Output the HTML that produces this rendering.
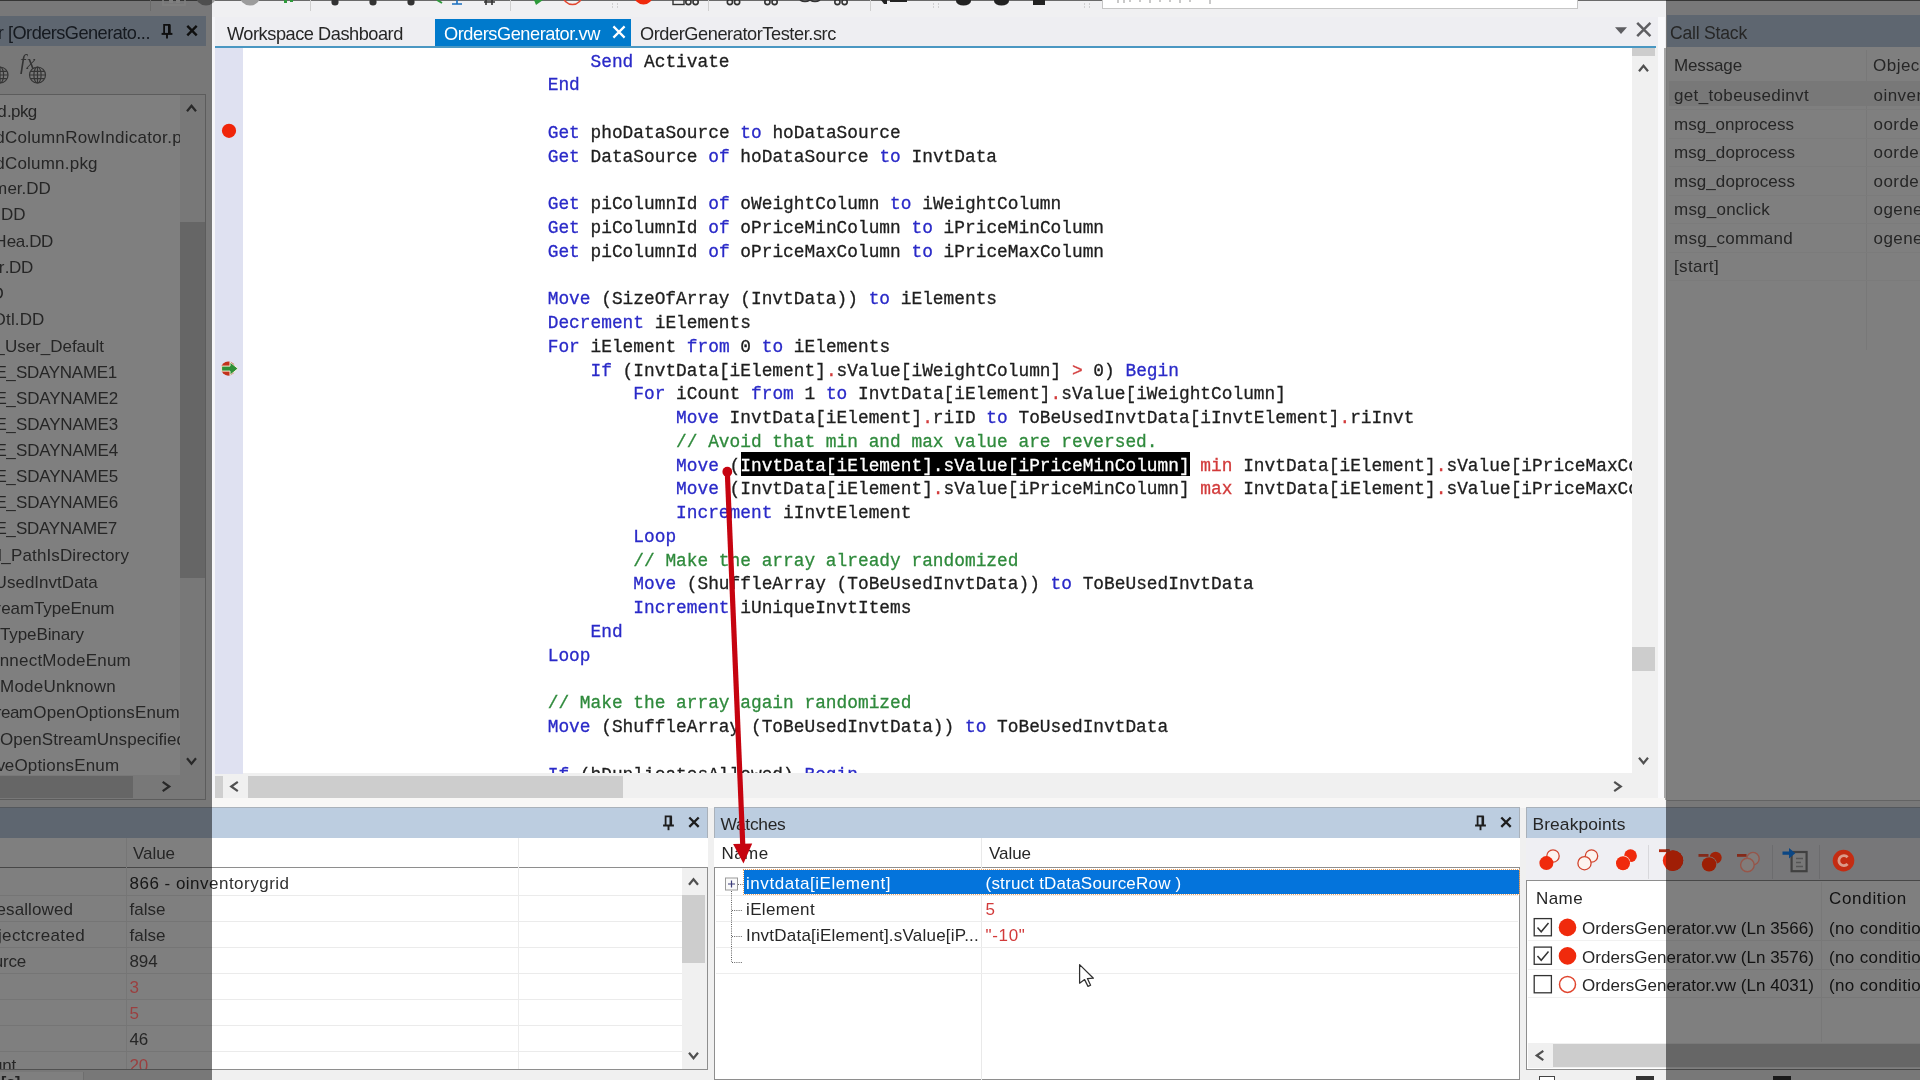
<!DOCTYPE html>
<html><head><meta charset="utf-8"><title>IDE</title>
<style>
*{box-sizing:border-box}
html,body{margin:0;padding:0}
body{width:1920px;height:1080px;overflow:hidden;background:#f0f0f0;position:relative;font-family:"Liberation Sans",sans-serif;}
#root{position:absolute;left:0;top:0;width:1920px;height:1080px;overflow:hidden;will-change:transform;transform:translateZ(0)}
.r{position:absolute}
.t{position:absolute;white-space:nowrap;line-height:24px;height:24px}
svg{position:absolute;overflow:visible}
#code{position:absolute;margin:0;white-space:pre;font-family:"Liberation Mono",monospace;color:#1e1e1e;-webkit-text-stroke:0.3px}
.k{color:#2a2ac8}.o{color:#d23a3a}.c{color:#2f8a3c}.s{color:#fff}.s i{font-style:normal;color:#8fe0ee}
.clip{position:absolute;overflow:hidden}
</style></head>
<body>
<div id="root">
<div class="r" style="left:0.0px;top:0.0px;width:1920.0px;height:17.0px;background:#f0f0f2;"></div>
<div class="r" style="left:212.0px;top:17.0px;width:1454.0px;height:29.0px;background:#eeeef2;"></div>
<div class="t " style="left:227.0px;top:21.5px;font-size:18.20px;color:#262626;letter-spacing:-0.463px;">Workspace Dashboard</div>
<div class="r" style="left:435.0px;top:19.0px;width:196.0px;height:27.0px;background:#007acc;"></div>
<div class="t " style="left:444.0px;top:21.5px;font-size:18.20px;color:#ffffff;letter-spacing:-0.437px;">OrdersGenerator.vw</div>
<div class="t " style="left:640.0px;top:21.5px;font-size:18.20px;color:#262626;letter-spacing:-0.431px;">OrderGeneratorTester.src</div>
<div class="r" style="left:215.0px;top:46.0px;width:1441.0px;height:2.0px;background:#4a97c2;"></div>
<div class="r" style="left:215.0px;top:48.0px;width:1417.0px;height:725.0px;background:#ffffff;"></div>
<div class="r" style="left:215.0px;top:48.0px;width:28.2px;height:726.0px;background:#dfe1f1;"></div>
<svg style="left:0;top:0" width="1920" height="1080"><circle cx="229" cy="130.8" r="7.1" fill="#f0250a"/></svg>
<div class="clip" style="left:243px;top:48px;width:1389px;height:725px">
<div class="r" style="left:497.5px;top:404.0px;width:449.3px;height:23.9px;background:#000000;"></div>
<pre id="code" style="left:304.70px;top:2.60px;font-size:17.839px;line-height:23.77px">    <span class="k">Send</span> Activate
<span class="k">End</span>

<span class="k">Get</span> phoDataSource <span class="k">to</span> hoDataSource
<span class="k">Get</span> DataSource <span class="k">of</span> hoDataSource <span class="k">to</span> InvtData

<span class="k">Get</span> piColumnId <span class="k">of</span> oWeightColumn <span class="k">to</span> iWeightColumn
<span class="k">Get</span> piColumnId <span class="k">of</span> oPriceMinColumn <span class="k">to</span> iPriceMinColumn
<span class="k">Get</span> piColumnId <span class="k">of</span> oPriceMaxColumn <span class="k">to</span> iPriceMaxColumn

<span class="k">Move</span> (SizeOfArray (InvtData)) <span class="k">to</span> iElements
<span class="k">Decrement</span> iElements
<span class="k">For</span> iElement <span class="k">from</span> 0 <span class="k">to</span> iElements
    <span class="k">If</span> (InvtData[iElement]<span class="o">.</span>sValue[iWeightColumn] <span class="o">&gt;</span> 0) <span class="k">Begin</span>
        <span class="k">For</span> iCount <span class="k">from</span> 1 <span class="k">to</span> InvtData[iElement]<span class="o">.</span>sValue[iWeightColumn]
            <span class="k">Move</span> InvtData[iElement]<span class="o">.</span>riID <span class="k">to</span> ToBeUsedInvtData[iInvtElement]<span class="o">.</span>riInvt
            <span class="c">// Avoid that min and max value are reversed.</span>
            <span class="k">Move</span> (<span class="s">InvtData[iElement]<span class="i">.</span>sValue[iPriceMinColumn]</span> <span class="o">min</span> InvtData[iElement]<span class="o">.</span>sValue[iPriceMaxColumn]) <span class="k">to</span> iPriceMin
            <span class="k">Move</span> (InvtData[iElement]<span class="o">.</span>sValue[iPriceMinColumn] <span class="o">max</span> InvtData[iElement]<span class="o">.</span>sValue[iPriceMaxColumn]) <span class="k">to</span> iPriceMax
            <span class="k">Increment</span> iInvtElement
        <span class="k">Loop</span>
        <span class="c">// Make the array already randomized</span>
        <span class="k">Move</span> (ShuffleArray (ToBeUsedInvtData)) <span class="k">to</span> ToBeUsedInvtData
        <span class="k">Increment</span> iUniqueInvtItems
    <span class="k">End</span>
<span class="k">Loop</span>

<span class="c">// Make the array again randomized</span>
<span class="k">Move</span> (ShuffleArray (ToBeUsedInvtData)) <span class="k">to</span> ToBeUsedInvtData

<span class="k">If</span> (bDuplicatesAllowed) <span class="k">Begin</span></pre>
</div>
<div class="r" style="left:1632.0px;top:48.0px;width:23.0px;height:725.0px;background:#f0f0f0;"></div>
<div class="r" style="left:1632.0px;top:48.0px;width:22.5px;height:8.0px;background:#cdcdcd;"></div>
<div class="r" style="left:1632.0px;top:646.7px;width:22.5px;height:24.8px;background:#cdcdcd;"></div>
<div class="r" style="left:215.0px;top:775.0px;width:1417.0px;height:23.0px;background:#f0f0f0;"></div>
<div class="r" style="left:215.0px;top:775.5px;width:8.0px;height:22.0px;background:#cfcfcf;"></div>
<div class="r" style="left:248.0px;top:775.5px;width:375.0px;height:22.0px;background:#cdcdcd;"></div>
<div class="r" style="left:1632.0px;top:773.0px;width:34.0px;height:25.0px;background:#f0f0f0;"></div>
<div class="r" style="left:1655.0px;top:48.0px;width:3.0px;height:752.0px;background:#f0f0f0;"></div>
<div class="r" style="left:1658.0px;top:17.0px;width:6.5px;height:788.0px;background:#f9f9fb;"></div>
<div class="r" style="left:1664.3px;top:48.0px;width:1.7px;height:752.0px;background:#a6a6a6;"></div>
<div class="r" style="left:212.0px;top:17.0px;width:3.0px;height:790.0px;background:#f6f6f9;"></div>
<div class="r" style="left:212.0px;top:798.0px;width:1453.0px;height:9.5px;background:#f8f7f6;"></div>
<div class="r" style="left:0.0px;top:16.0px;width:206.0px;height:30.0px;background:#bccde0;"></div>
<div class="t " style="left:8.0px;top:20.5px;font-size:18.20px;color:#2c3440;letter-spacing:-0.541px;">[OrdersGenerato...</div>
<div class="t" style="right:1916.5px;top:20.5px;font-size:18.20px;color:#2c3440;letter-spacing:-0.200px;">Code Explorer</div>
<div class="r" style="left:-2.0px;top:94.0px;width:208.0px;height:706.0px;background:#ffffff;border:1.5px solid #b8b8b8"></div>
<div class="clip" style="left:0;top:95px;width:180px;height:680px">
<div class="t " style="left:7.0px;top:4.5px;font-size:17.00px;color:#4c4c4c;letter-spacing:-0.608px;">.pkg</div>
<div class="t" style="right:173.8px;top:4.5px;font-size:17.00px;color:#4c4c4c;letter-spacing:-0.500px;">Head</div>
<div class="t " style="left:4.9px;top:31.0px;font-size:17.00px;color:#4c4c4c;letter-spacing:0.300px;">ColumnRowIndicator.pkg</div>
<div class="t" style="right:175.9px;top:31.0px;font-size:17.00px;color:#4c4c4c;letter-spacing:-0.500px;">cDbGrid</div>
<div class="t " style="left:4.9px;top:56.8px;font-size:17.00px;color:#4c4c4c;letter-spacing:0.219px;">Column.pkg</div>
<div class="t" style="right:175.9px;top:56.8px;font-size:17.00px;color:#4c4c4c;letter-spacing:-0.500px;">cDbGrid</div>
<div class="t " style="left:7.4px;top:82.3px;font-size:17.00px;color:#4c4c4c;letter-spacing:-0.031px;">er.DD</div>
<div class="t" style="right:173.4px;top:82.3px;font-size:17.00px;color:#4c4c4c;letter-spacing:-0.500px;">Custom</div>
<div class="t " style="left:1.0px;top:108.3px;font-size:17.00px;color:#4c4c4c;letter-spacing:-0.027px;">DD</div>
<div class="t" style="right:179.8px;top:108.3px;font-size:17.00px;color:#4c4c4c;letter-spacing:-0.500px;">Invt.</div>
<div class="t " style="left:6.8px;top:134.5px;font-size:17.00px;color:#4c4c4c;letter-spacing:-0.417px;">ea.DD</div>
<div class="t" style="right:174.0px;top:134.5px;font-size:17.00px;color:#4c4c4c;letter-spacing:-0.500px;">OrderH</div>
<div class="t " style="left:4.7px;top:161.2px;font-size:17.00px;color:#4c4c4c;letter-spacing:-0.359px;">.DD</div>
<div class="t" style="right:176.1px;top:161.2px;font-size:17.00px;color:#4c4c4c;letter-spacing:-0.500px;">Vendor</div>
<div class="t" style="right:176.8px;top:187.0px;font-size:17.00px;color:#4c4c4c;letter-spacing:-0.500px;">SalesP.DD</div>
<div class="t " style="left:6.1px;top:213.4px;font-size:17.00px;color:#4c4c4c;letter-spacing:0.105px;">tl.DD</div>
<div class="t" style="right:174.7px;top:213.4px;font-size:17.00px;color:#4c4c4c;letter-spacing:-0.500px;">OrderD</div>
<div class="t " style="left:4.9px;top:240.0px;font-size:17.00px;color:#4c4c4c;letter-spacing:-0.009px;">User_Default</div>
<div class="t" style="right:175.9px;top:240.0px;font-size:17.00px;color:#4c4c4c;letter-spacing:-0.500px;">DF_</div>
<div class="t " style="left:16.0px;top:265.7px;font-size:17.00px;color:#4c4c4c;letter-spacing:-0.290px;">SDAYNAME1</div>
<div class="t" style="right:164.8px;top:265.7px;font-size:17.00px;color:#4c4c4c;letter-spacing:-0.500px;">LOCALE_</div>
<div class="t " style="left:16.0px;top:291.9px;font-size:17.00px;color:#4c4c4c;letter-spacing:-0.179px;">SDAYNAME2</div>
<div class="t" style="right:164.8px;top:291.9px;font-size:17.00px;color:#4c4c4c;letter-spacing:-0.500px;">LOCALE_</div>
<div class="t " style="left:16.0px;top:317.9px;font-size:17.00px;color:#4c4c4c;letter-spacing:-0.179px;">SDAYNAME3</div>
<div class="t" style="right:164.8px;top:317.9px;font-size:17.00px;color:#4c4c4c;letter-spacing:-0.500px;">LOCALE_</div>
<div class="t " style="left:16.0px;top:344.1px;font-size:17.00px;color:#4c4c4c;letter-spacing:-0.179px;">SDAYNAME4</div>
<div class="t" style="right:164.8px;top:344.1px;font-size:17.00px;color:#4c4c4c;letter-spacing:-0.500px;">LOCALE_</div>
<div class="t " style="left:16.0px;top:370.1px;font-size:17.00px;color:#4c4c4c;letter-spacing:-0.179px;">SDAYNAME5</div>
<div class="t" style="right:164.8px;top:370.1px;font-size:17.00px;color:#4c4c4c;letter-spacing:-0.500px;">LOCALE_</div>
<div class="t " style="left:16.0px;top:396.1px;font-size:17.00px;color:#4c4c4c;letter-spacing:-0.179px;">SDAYNAME6</div>
<div class="t" style="right:164.8px;top:396.1px;font-size:17.00px;color:#4c4c4c;letter-spacing:-0.500px;">LOCALE_</div>
<div class="t " style="left:16.0px;top:422.3px;font-size:17.00px;color:#4c4c4c;letter-spacing:-0.290px;">SDAYNAME7</div>
<div class="t" style="right:164.8px;top:422.3px;font-size:17.00px;color:#4c4c4c;letter-spacing:-0.500px;">LOCALE_</div>
<div class="t " style="left:11.0px;top:449.0px;font-size:17.00px;color:#4c4c4c;letter-spacing:0.120px;">PathIsDirectory</div>
<div class="t" style="right:169.8px;top:449.0px;font-size:17.00px;color:#4c4c4c;letter-spacing:-0.500px;">Shell_</div>
<div class="t " style="left:-5.4px;top:475.7px;font-size:17.00px;color:#4c4c4c;letter-spacing:0.017px;">UsedInvtData</div>
<div class="t" style="right:186.2px;top:475.7px;font-size:17.00px;color:#4c4c4c;letter-spacing:-0.500px;">tToBe</div>
<div class="t " style="left:1.2px;top:502.3px;font-size:17.00px;color:#4c4c4c;letter-spacing:-0.104px;">eamTypeEnum</div>
<div class="t" style="right:179.6px;top:502.3px;font-size:17.00px;color:#4c4c4c;letter-spacing:-0.500px;">eStr</div>
<div class="t " style="left:0.0px;top:528.0px;font-size:17.00px;color:#4c4c4c;letter-spacing:-0.105px;">TypeBinary</div>
<div class="t" style="right:180.8px;top:528.0px;font-size:17.00px;color:#4c4c4c;letter-spacing:-0.500px;">eStream</div>
<div class="t " style="left:-0.3px;top:554.0px;font-size:17.00px;color:#4c4c4c;letter-spacing:0.213px;">nnectModeEnum</div>
<div class="t" style="right:181.1px;top:554.0px;font-size:17.00px;color:#4c4c4c;letter-spacing:-0.500px;">eCo</div>
<div class="t " style="left:0.0px;top:580.0px;font-size:17.00px;color:#4c4c4c;letter-spacing:0.236px;">ModeUnknown</div>
<div class="t" style="right:180.8px;top:580.0px;font-size:17.00px;color:#4c4c4c;letter-spacing:-0.500px;">eConnect</div>
<div class="t " style="left:33.3px;top:606.0px;font-size:17.00px;color:#4c4c4c;letter-spacing:0.134px;">OpenOptionsEnum</div>
<div class="t" style="right:147.5px;top:606.0px;font-size:17.00px;color:#4c4c4c;letter-spacing:-0.500px;">eStream</div>
<div class="t " style="left:0.0px;top:632.5px;font-size:17.00px;color:#4c4c4c;letter-spacing:0.042px;">OpenStreamUnspecified</div>
<div class="t" style="right:180.8px;top:632.5px;font-size:17.00px;color:#4c4c4c;letter-spacing:-0.500px;">e</div>
<div class="t " style="left:14.4px;top:659.0px;font-size:17.00px;color:#4c4c4c;letter-spacing:0.173px;">OptionsEnum</div>
<div class="t" style="right:166.4px;top:659.0px;font-size:17.00px;color:#4c4c4c;letter-spacing:-0.500px;">eSave</div>
</div>
<div class="r" style="left:180.0px;top:95.0px;width:25.0px;height:680.0px;background:#f0f0f0;"></div>
<div class="r" style="left:180.0px;top:222.0px;width:25.0px;height:356.0px;background:#cdcdcd;"></div>
<div class="r" style="left:-1.0px;top:775.0px;width:206.0px;height:24.0px;background:#f0f0f0;"></div>
<div class="r" style="left:-1.0px;top:776.0px;width:134.0px;height:22.0px;background:#cdcdcd;"></div>
<div class="r" style="left:0.0px;top:807.3px;width:708.0px;height:30.5px;background:#bccde0;border-top:1px solid #a9b1ba;border-right:1px solid #a9b1ba"></div>
<div class="r" style="left:0.0px;top:838.0px;width:708.0px;height:30.0px;background:#ffffff;"></div>
<div class="r" style="left:0.0px;top:867.0px;width:708.0px;height:203.0px;background:#ffffff;border:1px solid #8e8e8e;border-left:none"></div>
<div class="r" style="left:126.0px;top:838.0px;width:1.0px;height:231.0px;background:#ececec;"></div>
<div class="r" style="left:518.0px;top:838.0px;width:1.0px;height:231.0px;background:#ececec;"></div>
<div class="t " style="left:133.0px;top:842.0px;font-size:17.00px;color:#4c4c4c;letter-spacing:-0.044px;">Value</div>
<div class="clip" style="left:0;top:868px;width:682px;height:201px">
<div class="r" style="left:0.0px;top:26.5px;width:682.0px;height:1.0px;background:#ebebeb;"></div>
<div class="r" style="left:0.0px;top:52.6px;width:682.0px;height:1.0px;background:#ebebeb;"></div>
<div class="r" style="left:0.0px;top:78.7px;width:682.0px;height:1.0px;background:#ebebeb;"></div>
<div class="r" style="left:0.0px;top:104.8px;width:682.0px;height:1.0px;background:#ebebeb;"></div>
<div class="r" style="left:0.0px;top:130.9px;width:682.0px;height:1.0px;background:#ebebeb;"></div>
<div class="r" style="left:0.0px;top:157.0px;width:682.0px;height:1.0px;background:#ebebeb;"></div>
<div class="r" style="left:0.0px;top:183.1px;width:682.0px;height:1.0px;background:#ebebeb;"></div>
<div class="r" style="left:0.0px;top:209.2px;width:682.0px;height:1.0px;background:#ebebeb;"></div>
<div class="t " style="left:129.5px;top:4.0px;font-size:17.00px;color:#303030;letter-spacing:0.487px;">866 - oinventorygrid</div>
<div class="t " style="left:129.5px;top:30.0px;font-size:17.00px;color:#4c4c4c;letter-spacing:0.018px;">false</div>
<div class="t " style="left:129.5px;top:56.0px;font-size:17.00px;color:#4c4c4c;letter-spacing:0.018px;">false</div>
<div class="t " style="left:129.5px;top:82.0px;font-size:17.00px;color:#4c4c4c;letter-spacing:-0.122px;">894</div>
<div class="t " style="left:129.5px;top:108.0px;font-size:17.00px;color:transparent;letter-spacing:-0.1px;">3</div>
<div class="t " style="left:129.5px;top:134.0px;font-size:17.00px;color:transparent;letter-spacing:-0.1px;">5</div>
<div class="t " style="left:129.5px;top:160.0px;font-size:17.00px;color:#4c4c4c;letter-spacing:-0.1px;">46</div>
<div class="t " style="left:129.5px;top:186.0px;font-size:17.00px;color:transparent;letter-spacing:-0.1px;">20</div>
<div class="t" style="right:609.0px;top:30.0px;font-size:17.00px;color:#4c4c4c;letter-spacing:0.100px;">pbduplicatesallowed</div>
<div class="t" style="right:597.0px;top:56.0px;font-size:17.00px;color:#4c4c4c;letter-spacing:0.350px;">pbprojectobjectcreated</div>
<div class="t" style="right:656.0px;top:82.0px;font-size:17.00px;color:#4c4c4c;letter-spacing:-0.200px;">phodatasource</div>
<div class="t" style="right:666.0px;top:186.0px;font-size:17.00px;color:#4c4c4c;letter-spacing:-0.200px;">picount</div>
</div>
<div class="r" style="left:682.0px;top:868.0px;width:25.0px;height:201.0px;background:#f0f0f0;"></div>
<div class="r" style="left:682.0px;top:895.0px;width:22.8px;height:68.0px;background:#cdcdcd;"></div>
<div class="r" style="left:714.0px;top:807.3px;width:806.0px;height:30.5px;background:#bccde0;border-top:1px solid #a9b1ba;border-left:1px solid #a9b1ba;border-right:1px solid #a9b1ba"></div>
<div class="t " style="left:720.5px;top:811.7px;font-size:17.40px;color:#262626;letter-spacing:-0.292px;">Watches</div>
<div class="r" style="left:714.0px;top:838.0px;width:806.0px;height:30.0px;background:#ffffff;"></div>
<div class="t " style="left:721.5px;top:842.0px;font-size:17.00px;color:#262626;letter-spacing:0.413px;">Name</div>
<div class="t " style="left:989.0px;top:842.0px;font-size:17.00px;color:#262626;letter-spacing:-0.044px;">Value</div>
<div class="r" style="left:714.0px;top:867.0px;width:806.0px;height:213.0px;background:#ffffff;border:1px solid #8e8e8e"></div>
<div class="r" style="left:981.0px;top:838.0px;width:1.0px;height:242.0px;background:#e9e9e9;"></div>
<div class="r" style="left:716.0px;top:894.5px;width:802.0px;height:1.0px;background:#ededed;"></div>
<div class="r" style="left:716.0px;top:920.6px;width:802.0px;height:1.0px;background:#ededed;"></div>
<div class="r" style="left:716.0px;top:946.7px;width:802.0px;height:1.0px;background:#ededed;"></div>
<div class="r" style="left:716.0px;top:972.8px;width:802.0px;height:1.0px;background:#ededed;"></div>
<div class="r" style="left:743.5px;top:870.0px;width:775.0px;height:24.0px;background:#0474dc;outline:1px dotted #e8a060"></div>
<div class="t " style="left:746.0px;top:872.0px;font-size:17.00px;color:#ffffff;letter-spacing:0.548px;">invtdata[iElement]</div>
<div class="t " style="left:985.5px;top:872.0px;font-size:17.00px;color:#ffffff;letter-spacing:0.215px;">(struct tDataSourceRow )</div>
<div class="t " style="left:746.0px;top:898.0px;font-size:17.00px;color:#262626;letter-spacing:0.357px;">iElement</div>
<div class="t " style="left:985.5px;top:898.0px;font-size:17.00px;color:#d23a3a;letter-spacing:-0.1px;">5</div>
<div class="t " style="left:746.0px;top:924.0px;font-size:17.00px;color:#262626;letter-spacing:0.221px;">InvtData[iElement].sValue[iP...</div>
<div class="t " style="left:985.5px;top:924.0px;font-size:17.00px;color:#d23a3a;letter-spacing:0.672px;">&quot;-10&quot;</div>
<div class="r" style="left:1526.0px;top:807.3px;width:400.0px;height:30.5px;background:#bccde0;border-top:1px solid #a9b1ba;border-left:1px solid #a9b1ba"></div>
<div class="t " style="left:1532.5px;top:811.7px;font-size:17.40px;color:#262626;letter-spacing:0.101px;">Breakpoints</div>
<div class="r" style="left:1526.0px;top:838.0px;width:400.0px;height:42.0px;background:#efeff3;"></div>
<div class="r" style="left:1526.0px;top:880.0px;width:400.0px;height:190.0px;background:#ffffff;border:1.5px solid #8e8e8e"></div>
<div class="t " style="left:1536.0px;top:887.0px;font-size:17.00px;color:#262626;letter-spacing:0.413px;">Name</div>
<div class="t " style="left:1829.0px;top:887.0px;font-size:17.00px;color:#262626;letter-spacing:0.686px;">Condition</div>
<div class="r" style="left:1821.0px;top:882.0px;width:1.0px;height:160.0px;background:#f1f1f1;"></div>
<div class="t " style="left:1582.0px;top:917.0px;font-size:17.00px;color:#262626;letter-spacing:0.051px;">OrdersGenerator.vw (Ln 3566)</div>
<div class="t " style="left:1829.0px;top:917.0px;font-size:17.00px;color:#262626;letter-spacing:0.357px;">(no condition)</div>
<div class="r" style="left:1528.0px;top:940.4px;width:392.0px;height:1.0px;background:#f1f1f1;"></div>
<div class="t " style="left:1582.0px;top:945.5px;font-size:17.00px;color:#262626;letter-spacing:0.051px;">OrdersGenerator.vw (Ln 3576)</div>
<div class="t " style="left:1829.0px;top:945.5px;font-size:17.00px;color:#262626;letter-spacing:0.357px;">(no condition)</div>
<div class="r" style="left:1528.0px;top:968.9px;width:392.0px;height:1.0px;background:#f1f1f1;"></div>
<div class="t " style="left:1582.0px;top:974.0px;font-size:17.00px;color:#262626;letter-spacing:0.051px;">OrdersGenerator.vw (Ln 4031)</div>
<div class="t " style="left:1829.0px;top:974.0px;font-size:17.00px;color:#262626;letter-spacing:0.357px;">(no condition)</div>
<div class="r" style="left:1528.0px;top:997.4px;width:392.0px;height:1.0px;background:#f1f1f1;"></div>
<div class="r" style="left:1528.0px;top:1043.0px;width:392.0px;height:25.0px;background:#f0f0f0;"></div>
<div class="r" style="left:1553.0px;top:1044.0px;width:367.0px;height:23.0px;background:#cdcdcd;"></div>
<div class="r" style="left:1667.0px;top:15.0px;width:260.0px;height:32.0px;background:#bccde0;"></div>
<div class="t " style="left:1670.0px;top:21.3px;font-size:17.60px;color:#4c4c4c;letter-spacing:-0.223px;">Call Stack</div>
<div class="r" style="left:1667.0px;top:47.0px;width:260.0px;height:754.0px;background:#ffffff;border-bottom:1.6px solid #c6c6c6"></div>
<div class="t " style="left:1674.0px;top:54.0px;font-size:17.00px;color:#4c4c4c;letter-spacing:-0.140px;">Message</div>
<div class="t " style="left:1873.0px;top:54.0px;font-size:17.00px;color:#4c4c4c;letter-spacing:0.478px;">Object</div>
<div class="r" style="left:1866.0px;top:50.0px;width:1.0px;height:300.0px;background:#f1f1f1;"></div>
<div class="r" style="left:1669.0px;top:80.5px;width:251.0px;height:25.5px;background:#f0f0f0;"></div>
<div class="t " style="left:1674.0px;top:84.0px;font-size:17.00px;color:#4c4c4c;letter-spacing:0.344px;">get_tobeusedinvt</div>
<div class="t " style="left:1873.5px;top:84.0px;font-size:17.00px;color:#4c4c4c;letter-spacing:-0.1px;letter-spacing:0.45px">oinventorygrid</div>
<div class="r" style="left:1669.0px;top:109.0px;width:251.0px;height:1.0px;background:#f6f6f6;"></div>
<div class="t " style="left:1674.0px;top:112.5px;font-size:17.00px;color:#4c4c4c;letter-spacing:-0.001px;">msg_onprocess</div>
<div class="t " style="left:1873.5px;top:112.5px;font-size:17.00px;color:#4c4c4c;letter-spacing:-0.1px;letter-spacing:0.45px">oordergenerator</div>
<div class="r" style="left:1669.0px;top:137.5px;width:251.0px;height:1.0px;background:#f6f6f6;"></div>
<div class="t " style="left:1674.0px;top:141.0px;font-size:17.00px;color:#4c4c4c;letter-spacing:0.076px;">msg_doprocess</div>
<div class="t " style="left:1873.5px;top:141.0px;font-size:17.00px;color:#4c4c4c;letter-spacing:-0.1px;letter-spacing:0.45px">oordergenerator</div>
<div class="r" style="left:1669.0px;top:166.0px;width:251.0px;height:1.0px;background:#f6f6f6;"></div>
<div class="t " style="left:1674.0px;top:169.5px;font-size:17.00px;color:#4c4c4c;letter-spacing:0.076px;">msg_doprocess</div>
<div class="t " style="left:1873.5px;top:169.5px;font-size:17.00px;color:#4c4c4c;letter-spacing:-0.1px;letter-spacing:0.45px">oordergenerator</div>
<div class="r" style="left:1669.0px;top:194.5px;width:251.0px;height:1.0px;background:#f6f6f6;"></div>
<div class="t " style="left:1674.0px;top:198.0px;font-size:17.00px;color:#4c4c4c;letter-spacing:0.224px;">msg_onclick</div>
<div class="t " style="left:1873.5px;top:198.0px;font-size:17.00px;color:#4c4c4c;letter-spacing:-0.1px;letter-spacing:0.45px">ogeneratebutton</div>
<div class="r" style="left:1669.0px;top:223.0px;width:251.0px;height:1.0px;background:#f6f6f6;"></div>
<div class="t " style="left:1674.0px;top:226.5px;font-size:17.00px;color:#4c4c4c;letter-spacing:0.253px;">msg_command</div>
<div class="t " style="left:1873.5px;top:226.5px;font-size:17.00px;color:#4c4c4c;letter-spacing:-0.1px;letter-spacing:0.45px">ogeneratebutton</div>
<div class="r" style="left:1669.0px;top:251.5px;width:251.0px;height:1.0px;background:#f6f6f6;"></div>
<div class="t " style="left:1674.0px;top:255.0px;font-size:17.00px;color:#4c4c4c;letter-spacing:0.356px;">[start]</div>
<div class="r" style="left:1669.0px;top:280.0px;width:251.0px;height:1.0px;background:#f6f6f6;"></div>
<div class="t" style="left:20px;top:50px;font-family:'Liberation Serif',serif;font-style:italic;font-size:20px;letter-spacing:1px;color:#666">fx</div>
<svg style="left:0;top:0" width="1920" height="1080"><polyline points="1639.0,71.2 1643.5,65.8 1648.0,71.2" fill="none" stroke="#505050" stroke-width="2.2"/><polyline points="1639.0,757.8 1643.5,763.2 1648.0,757.8" fill="none" stroke="#505050" stroke-width="2.2"/><polyline points="237.8,781.8 231.2,786.5 237.8,791.2" fill="none" stroke="#505050" stroke-width="2.2"/><polyline points="1614.2,781.8 1620.8,786.5 1614.2,791.2" fill="none" stroke="#505050" stroke-width="2.2"/><polyline points="187.0,111.2 191.5,105.8 196.0,111.2" fill="none" stroke="#505050" stroke-width="2.2"/><polyline points="187.0,758.3 191.5,763.7 196.0,758.3" fill="none" stroke="#505050" stroke-width="2.2"/><polyline points="162.7,781.8 169.3,786.5 162.7,791.2" fill="none" stroke="#505050" stroke-width="2.2"/><polyline points="689.0,884.7 693.5,879.3 698.0,884.7" fill="none" stroke="#505050" stroke-width="2.2"/><polyline points="689.0,1052.8 693.5,1058.2 698.0,1052.8" fill="none" stroke="#505050" stroke-width="2.2"/><polyline points="1543.3,1050.8 1536.7,1055.5 1543.3,1060.2" fill="none" stroke="#505050" stroke-width="2.2"/><path d="M613.4 26.4L624.6 37.6M624.6 26.4L613.4 37.6" stroke="#ffffff" stroke-width="2.2" fill="none"/><path d="M1615 27.3h12l-6 6.6z" fill="#5e5e62"/><path d="M1637.2 22.9L1650.4 36.1M1650.4 22.9L1637.2 36.1" stroke="#5e5e62" stroke-width="2.5" fill="none"/><g stroke="#1e1e1e" fill="none"><path d="M164.1 33.4V24.8H169.4V33.4" stroke-width="1.8"/><path d="M169.3 24.8V33.4" stroke-width="2.6"/><path d="M161.6 33.9H172.4" stroke-width="2"/><path d="M167.0 34.0V38.6" stroke-width="1.9"/></g><path d="M187.3 25.9L196.7 35.3M196.7 25.9L187.3 35.3" stroke="#1e1e1e" stroke-width="2.4" fill="none"/><g stroke="#1e1e1e" fill="none"><path d="M665.6 825.0V816.4H670.9V825.0" stroke-width="1.8"/><path d="M670.8 816.4V825.0" stroke-width="2.6"/><path d="M663.1 825.5H673.9" stroke-width="2"/><path d="M668.5 825.6V830.2" stroke-width="1.9"/></g><path d="M689.3 817.5L698.7 826.9M698.7 817.5L689.3 826.9" stroke="#1e1e1e" stroke-width="2.3" fill="none"/><g stroke="#1e1e1e" fill="none"><path d="M1477.6 825.0V816.4H1482.9V825.0" stroke-width="1.8"/><path d="M1482.8 816.4V825.0" stroke-width="2.6"/><path d="M1475.1 825.5H1485.9" stroke-width="2"/><path d="M1480.5 825.6V830.2" stroke-width="1.9"/></g><path d="M1501.3 817.5L1510.7 826.9M1510.7 817.5L1501.3 826.9" stroke="#1e1e1e" stroke-width="2.3" fill="none"/><circle cx="228.2" cy="368.6" r="7.1" fill="#c2321c"/><path d="M221.6 366.1H230V362l8 6.6-8 6.6v-4.1H221.6z" fill="#2f9038" stroke="#f4f0d8" stroke-width="1"/><rect x="725.5" y="878" width="12" height="12" fill="#fafafa" stroke="#9a9a9a" stroke-width="1"/><path d="M728 884H735M731.5 880.5V887.5" stroke="#3a3a78" stroke-width="1.2"/><path d="M731.5 891V962M738 884.5H743M732 910.5H743M732 936.5H743M732 962.5H742" stroke="#606060" stroke-width="1" stroke-dasharray="1 1.2" fill="none"/><circle cx="1553.0" cy="856.0" r="6.2" fill="#fdf3ee" stroke="#d2452e" stroke-width="1.3"/><circle cx="1546.4" cy="863.1" r="7.0" fill="#f02a0c"/><circle cx="1591.5" cy="856.0" r="6.2" fill="#fdf3ee" stroke="#d2452e" stroke-width="1.3"/><circle cx="1584.5" cy="863.2" r="6.6" fill="#fdf3ee" stroke="#d2452e" stroke-width="1.3"/><circle cx="1630.5" cy="855.7" r="6.4" fill="#f02a0c"/><circle cx="1623" cy="863.2" r="7.6" fill="#fdf3ee"/><circle cx="1623.0" cy="863.2" r="7.0" fill="#f02a0c"/><path d="M1648.5 845V879M1772.5 845V879M1819.5 845V879" stroke="#d8d8dc" stroke-width="1"/><circle cx="1673.0" cy="860.6" r="10.2" fill="#f02a0c"/><rect x="1659" y="849.3" width="10" height="2.8" fill="#b02a10"/><rect x="1534.2" y="918.6" width="17.2" height="17.2" fill="#fff" stroke="#333" stroke-width="1.3"/><path d="M1537.5 927.5L1541.2 931.8L1548.5 923.0" fill="none" stroke="#333" stroke-width="1.5"/><circle cx="1567.5" cy="927.4" r="8.8" fill="#f02a0c"/><rect x="1534.2" y="947.1" width="17.2" height="17.2" fill="#fff" stroke="#333" stroke-width="1.3"/><path d="M1537.5 956.0L1541.2 960.3L1548.5 951.5" fill="none" stroke="#333" stroke-width="1.5"/><circle cx="1567.5" cy="955.9" r="8.8" fill="#f02a0c"/><rect x="1534.2" y="975.6" width="17.2" height="17.2" fill="#fff" stroke="#333" stroke-width="1.3"/><circle cx="1567.5" cy="984.4" r="8" fill="#fff" stroke="#e0452e" stroke-width="1.5"/><g fill="none" stroke="#6a6a6a" stroke-width="1.2"><circle cx="0.0" cy="75.0" r="8.0"/><path d="M-8.0 75.0H8.0M0.0 67.0V83.0M-6.8 71.4H6.8M-6.8 78.6H6.8"/><ellipse cx="0.0" cy="75.0" rx="3.6" ry="8.0"/></g><g fill="none" stroke="#6a6a6a" stroke-width="1.2"><circle cx="37.5" cy="75.0" r="8.0"/><path d="M29.5 75.0H45.5M37.5 67.0V83.0M30.7 71.4H44.3M30.7 78.6H44.3"/><ellipse cx="37.5" cy="75.0" rx="3.6" ry="8.0"/></g></svg>
<svg style="left:0;top:0" width="1920" height="20"><rect x="0" y="0" width="1920" height="1" fill="#6a6a6a"/><rect x="163" y="-4" width="22" height="9" fill="none" stroke="#ffffff" stroke-width="1.6"/><rect x="169" y="0" width="4" height="3" fill="#fff"/><rect x="176" y="0" width="4" height="3" fill="#fff"/><path d="M150.5 0V11" stroke="#d4d4d4"/><circle cx="250" cy="-5" r="10.5" fill="#9c9c9c"/><circle cx="206" cy="-5" r="10.5" fill="#9c9c9c"/><rect x="284" y="0" width="3" height="3" fill="#2e9a3a"/><rect x="290" y="0" width="3" height="2" fill="#2e9a3a"/><path d="M310.5 0V11M510.5 0V11M708.5 0V11M870.5 0V11" stroke="#cfcfcf" stroke-width="1"/><circle cx="335" cy="2" r="3.6" fill="#333"/><circle cx="373" cy="2" r="3.6" fill="#333"/><circle cx="411" cy="2" r="3.6" fill="#333"/><path d="M437 0l5 3" stroke="#2e9a3a" stroke-width="2"/><path d="M457 0v4M452 4h10" stroke="#1a6fc0" stroke-width="1.6"/><path d="M484 2h11M486 0v5M492 0v5" stroke="#333" stroke-width="1.6"/><path d="M534 0l9 0-7 5z" fill="#2e9a3a"/><circle cx="572.5" cy="-5" r="9.5" fill="none" stroke="#e2452e" stroke-width="1.6"/><circle cx="643.5" cy="-5" r="9.5" fill="#f02a0c"/><path d="M612 4h1M617 4h1M612 7h1M617 7h1" stroke="#b0b0b0" stroke-width="1.2"/><path d="M933 4h1M938 4h1M933 7h1M938 7h1" stroke="#b0b0b0" stroke-width="1.2"/><path d="M1084 4h1M1089 4h1M1084 7h1M1089 7h1" stroke="#b0b0b0" stroke-width="1.2"/><rect x="673" y="-3" width="11" height="7.5" fill="none" stroke="#333" stroke-width="1.4"/><g fill="none" stroke="#333" stroke-width="1.6"><circle cx="688.4" cy="2" r="2.6"/><circle cx="695.6" cy="2" r="2.6"/></g><g fill="none" stroke="#333" stroke-width="1.6"><circle cx="729.9" cy="2" r="2.6"/><circle cx="737.1" cy="2" r="2.6"/></g><g fill="none" stroke="#333" stroke-width="1.6"><circle cx="767.4" cy="2" r="2.6"/><circle cx="774.6" cy="2" r="2.6"/></g><g fill="none" stroke="#333" stroke-width="1.6"><circle cx="837.4" cy="2" r="2.6"/><circle cx="844.6" cy="2" r="2.6"/></g><path d="M800 0q5 3 10 0M810 0q5 3 10 0" fill="none" stroke="#333" stroke-width="1.6"/><path d="M881 0l3 4h3V0z" fill="#222"/><rect x="890" y="0" width="17" height="2" fill="#222"/><ellipse cx="963.5" cy="1" rx="7.5" ry="4.5" fill="#222"/><ellipse cx="1001.5" cy="1" rx="7.5" ry="4.5" fill="#222"/><rect x="1033" y="0" width="12" height="5" fill="#222"/><rect x="1102.5" y="-2" width="475" height="10.5" fill="#fff" stroke="#c6c6c6" stroke-width="1"/><path d="M1118 0v3M1124 0v3M1130 0v2M1140 0v2M1150 0v3M1160 0v2M1170 0v2M1180 0v3M1190 0v2M1210 0v4" stroke="#b8b8b8" stroke-width="1.5"/></svg>
<div class="r" style="left:0.0px;top:1070.0px;width:709.0px;height:10.0px;background:#f0f0f0;"></div>
<div class="r" style="left:1521.0px;top:1070.0px;width:400.0px;height:10.0px;background:#f0f0f0;"></div>
<div class="r" style="left:0.0px;top:1069.0px;width:212.0px;height:1.0px;background:#a0a0a0;"></div>
<div class="r" style="left:0.0px;top:1071.5px;width:84.0px;height:10.0px;background:#ffffff;border-right:1px solid #dcdcdc"></div>
<div class="r" style="left:1538.5px;top:1076.0px;width:16.0px;height:6.0px;background:#ffffff;border:1px solid #444"></div>
<div class="r" style="left:1636.0px;top:1076.0px;width:18.0px;height:4.0px;background:#333;"></div>
<div class="r" style="left:1773.0px;top:1076.0px;width:18.0px;height:4.0px;background:#333;"></div>
<div class="t " style="left:1.0px;top:1071.0px;font-size:16.00px;color:#444;letter-spacing:-0.1px;font-weight:bold">[s]</div>
<svg style="left:0;top:0" width="1920" height="1080"><circle cx="727.3" cy="471.7" r="4.9" fill="#c60410"/><path d="M727.3 471.7L742.8 846" stroke="#c60410" stroke-width="5.2" fill="none"/><path d="M733.1 843.9L752.2 843.5L743.5 863.4z" fill="#c60410"/><path d="M1079.6 964.6V983.2L1084.6 979.6L1088 986.4L1090.6 985.2L1087.4 978.6L1093.4 978.2z" fill="#fff" stroke="#303030" stroke-width="1.25" stroke-linejoin="round"/></svg>
<div class="r" style="left:0.0px;top:0.0px;width:212.0px;height:1080.0px;background:rgba(0,0,0,0.5);"></div>
<div class="r" style="left:1666.0px;top:0.0px;width:254.0px;height:1080.0px;background:rgba(0,0,0,0.5);"></div>
<svg style="left:0;top:0" width="1920" height="1080"><defs><clipPath id="dimr"><rect x="1666" y="0" width="254" height="1080"/></clipPath></defs><g clip-path="url(#dimr)"><circle cx="1672.8" cy="860.6" r="10.4" fill="#a01e06"/><rect x="1659.4" y="849.3" width="10.6" height="2.8" fill="#842a1a"/><circle cx="1715.6" cy="857.8" r="6.1" fill="#a02208"/><circle cx="1709.1" cy="864.4" r="8" fill="#7c7674"/><circle cx="1709.1" cy="864.4" r="7.2" fill="#9c1e04"/><rect x="1698.5" y="854" width="10" height="2.8" fill="#842a1a"/><circle cx="1753.0" cy="858.6" r="6.2" fill="#827c7a" stroke="#96564a" stroke-width="1.4"/><circle cx="1747.4" cy="865.0" r="6.8" fill="#827c7a" stroke="#96564a" stroke-width="1.4"/><rect x="1737" y="854" width="9.5" height="2.8" fill="#842a1a"/><rect x="1791.6" y="852" width="15" height="19.2" fill="#787878" stroke="#404040" stroke-width="2.2"/><path d="M1796 858.5H1803M1796 862.5H1801M1796 866.5H1803" stroke="#555" stroke-width="1.3"/><path d="M1782.5 851.6H1789V848L1795.3 853.2 1789 858.4V854.8H1782.5z" fill="#0a4684"/><circle cx="1843.5" cy="860.6" r="10.8" fill="#c42c12"/><path d="M1847.6 857.3A5 5 0 1 0 1847.6 864" fill="none" stroke="#dc9a88" stroke-width="2.8"/></g></svg>
<div class="clip" style="left:0;top:868px;width:212px;height:201px">
<div class="t " style="left:129.5px;top:108.0px;font-size:17.00px;color:#9a4040;letter-spacing:-0.1px;">3</div>
<div class="t " style="left:129.5px;top:134.0px;font-size:17.00px;color:#9a4040;letter-spacing:-0.1px;">5</div>
<div class="t " style="left:129.5px;top:186.0px;font-size:17.00px;color:#9a4040;letter-spacing:-0.1px;">20</div>
</div>
</div>
</body></html>
